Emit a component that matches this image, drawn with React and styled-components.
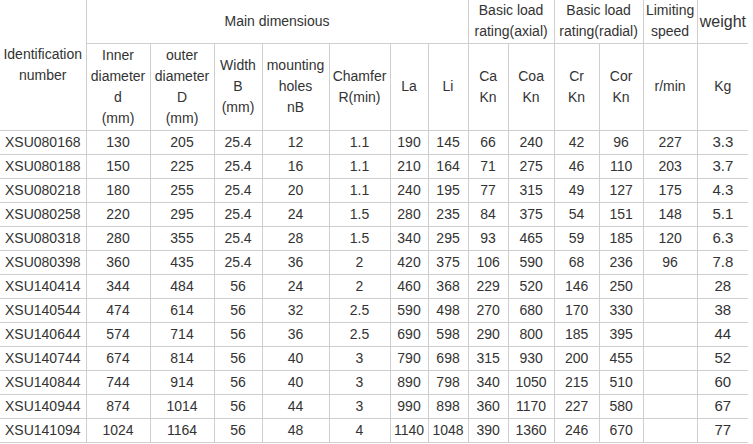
import React from 'react';
import styled, { createGlobalStyle } from 'styled-components';

const GlobalStyle = createGlobalStyle`
  html, body {
    margin: 0;
    padding: 0;
    background: #fff;
  }
  body {
    font-family: "Liberation Sans", Arial, sans-serif;
    color: #333;
  }
`;

const widths = [86, 64, 64, 48, 67, 61, 38, 40, 40, 46, 45, 44, 54, 51];

const rows = [
  ['XSU080168', '130', '205', '25.4', '12', '1.1', '190', '145', '66', '240', '42', '96', '227', '3.3'],
  ['XSU080188', '150', '225', '25.4', '16', '1.1', '210', '164', '71', '275', '46', '110', '203', '3.7'],
  ['XSU080218', '180', '255', '25.4', '20', '1.1', '240', '195', '77', '315', '49', '127', '175', '4.3'],
  ['XSU080258', '220', '295', '25.4', '24', '1.5', '280', '235', '84', '375', '54', '151', '148', '5.1'],
  ['XSU080318', '280', '355', '25.4', '28', '1.5', '340', '295', '93', '465', '59', '185', '120', '6.3'],
  ['XSU080398', '360', '435', '25.4', '36', '2', '420', '375', '106', '590', '68', '236', '96', '7.8'],
  ['XSU140414', '344', '484', '56', '24', '2', '460', '368', '229', '520', '146', '250', '', '28'],
  ['XSU140544', '474', '614', '56', '32', '2.5', '590', '498', '270', '680', '170', '330', '', '38'],
  ['XSU140644', '574', '714', '56', '36', '2.5', '690', '598', '290', '800', '185', '395', '', '44'],
  ['XSU140744', '674', '814', '56', '40', '3', '790', '698', '315', '930', '200', '455', '', '52'],
  ['XSU140844', '744', '914', '56', '40', '3', '890', '798', '340', '1050', '215', '510', '', '60'],
  ['XSU140944', '874', '1014', '56', '44', '3', '990', '898', '360', '1170', '227', '580', '', '67'],
  ['XSU141094', '1024', '1164', '56', '48', '4', '1140', '1048', '390', '1360', '246', '670', '', '77'],
];

const subHeads = [
  ['Inner', 'diameter', 'd', '(mm)'],
  ['outer', 'diameter', 'D', '(mm)'],
  ['Width', 'B', '(mm)'],
  ['mounting', 'holes', 'nB'],
  ['Chamfer', 'R(min)'],
  ['La'],
  ['Li'],
  ['Ca', 'Kn'],
  ['Coa', 'Kn'],
  ['Cr', 'Kn'],
  ['Cor', 'Kn'],
  ['r/min'],
  ['Kg'],
];

const Table = styled.table`
  border-collapse: collapse;
  table-layout: fixed;
  width: 748px;
  border-top: hidden;
  border-left: hidden;
  border-right: hidden;
  border-bottom: 1px solid #cfcfcf;
  font-size: 14px;
  line-height: 21px;
`;

const Head = styled.th`
  font-weight: normal;
  text-align: center;
  vertical-align: middle;
  padding: 0;
  border: 1px solid #cfcfcf;
  font-size: ${(p) => (p.$big ? '16px' : '14px')};
  white-space: nowrap;
`;

const TopRow = styled.tr`
  height: 43px;
`;

const SubRow = styled.tr`
  height: 87px;
`;

const DataRow = styled.tr`
  height: 24px;
`;

const Cell = styled.td`
  padding: 0;
  border: 1px solid #cfcfcf;
  text-align: center;
  font-size: 14px;
  line-height: 22px;
  white-space: nowrap;
`;

const IdCell = styled(Cell)`
  text-align: left;
  padding-left: 5px;
`;

const WeightCell = styled(Cell)`
  font-size: 15px;
`;

const Lines = ({ lines }) =>
  lines.map((l, i) => (
    <React.Fragment key={i}>
      {i > 0 && <br />}
      {l}
    </React.Fragment>
  ));

export default function App() {
  return (
    <>
      <GlobalStyle />
      <Table>
        <colgroup>
          {widths.map((w, i) => (
            <col key={i} style={{ width: w }} />
          ))}
        </colgroup>
        <thead>
          <TopRow>
            <Head rowSpan={2}>
              Identification
              <br />
              number
            </Head>
            <Head colSpan={7}>Main dimensious</Head>
            <Head colSpan={2}>
              Basic load
              <br />
              rating(axial)
            </Head>
            <Head colSpan={2}>
              Basic load
              <br />
              rating(radial)
            </Head>
            <Head>
              Limiting
              <br />
              speed
            </Head>
            <Head $big>weight</Head>
          </TopRow>
          <SubRow>
            {subHeads.map((h, i) => (
              <Head key={i}>
                <Lines lines={h} />
              </Head>
            ))}
          </SubRow>
        </thead>
        <tbody>
          {rows.map((r) => (
            <DataRow key={r[0]}>
              <IdCell>{r[0]}</IdCell>
              {r.slice(1, 13).map((v, i) => (
                <Cell key={i}>{v}</Cell>
              ))}
              <WeightCell>{r[13]}</WeightCell>
            </DataRow>
          ))}
        </tbody>
      </Table>
    </>
  );
}
